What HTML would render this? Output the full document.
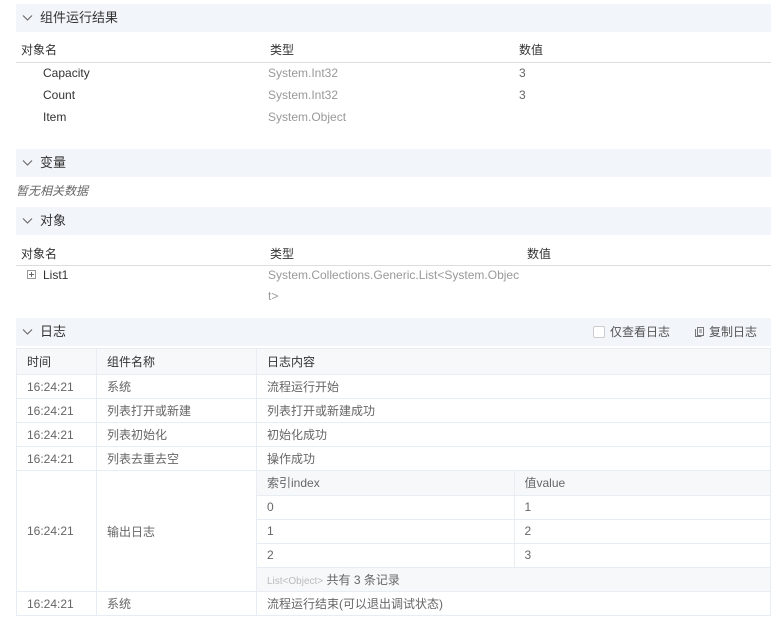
<!DOCTYPE html>
<html><head><meta charset="utf-8"><style>
*{margin:0;padding:0;box-sizing:border-box}
body{width:781px;height:622px;background:#fff;font-family:"Liberation Sans","Noto Sans CJK SC",sans-serif;font-size:12px;color:#333;position:relative;overflow:hidden}
.a{position:absolute;white-space:nowrap}
.hd{position:absolute;left:16px;width:755px;height:28px;background:#f2f5fa;font-size:13px;line-height:28px;padding-left:24px;color:#333}
.hd svg.ch{position:absolute;left:6px;top:10px}
.gray{color:#999}
table{position:absolute;border-collapse:collapse;font-size:12px;color:#666}
td{border:1px solid #e8ecf3;padding:0 0 0 10px;height:24px}
</style></head><body>
<div class="hd" style="top:4px"><svg class="ch" width="11" height="8"><path d="M1 1.5l4.5 4.5 4.5-4.5" fill="none" stroke="#666" stroke-width="1.1"/></svg>组件运行结果</div>
<div class="a" style="top:36px;left:16px;width:755px;height:27px;border-bottom:1px solid #ddd"></div>
<div class="a" style="top:41px;left:21px">对象名</div><div class="a" style="top:41px;left:270px">类型</div><div class="a" style="top:41px;left:519px">数值</div>
<div class="a" style="top:66px;left:43px">Capacity</div><div class="a gray" style="top:66px;left:268px">System.Int32</div><div class="a" style="top:66px;left:519px;color:#666">3</div>
<div class="a" style="top:88px;left:43px">Count</div><div class="a gray" style="top:88px;left:268px">System.Int32</div><div class="a" style="top:88px;left:519px;color:#666">3</div>
<div class="a" style="top:110px;left:43px">Item</div><div class="a gray" style="top:110px;left:268px">System.Object</div>
<div class="hd" style="top:149px"><svg class="ch" width="11" height="8"><path d="M1 1.5l4.5 4.5 4.5-4.5" fill="none" stroke="#666" stroke-width="1.1"/></svg>变量</div>
<div class="a" style="top:182px;left:16px;font-style:italic;color:#666">暂无相关数据</div>
<div class="hd" style="top:207px"><svg class="ch" width="11" height="8"><path d="M1 1.5l4.5 4.5 4.5-4.5" fill="none" stroke="#666" stroke-width="1.1"/></svg>对象</div>
<div class="a" style="top:240px;left:16px;width:755px;height:26px;border-bottom:1px solid #ddd"></div>
<div class="a" style="top:245px;left:21px">对象名</div><div class="a" style="top:245px;left:270px">类型</div><div class="a" style="top:245px;left:527px">数值</div>
<svg class="a" style="top:270px;left:27px" width="9" height="9"><rect x=".5" y=".5" width="8" height="8" fill="none" stroke="#999"/><path d="M2 4.5h5M4.5 2v5" stroke="#666"/></svg>
<div class="a" style="top:268px;left:43px">List1</div>
<div class="a gray" style="top:268px;left:268px">System.Collections.Generic.List&lt;System.Objec</div>
<div class="a gray" style="top:289px;left:268px">t&gt;</div>
<div class="hd" style="top:318px"><svg class="ch" width="11" height="8"><path d="M1 1.5l4.5 4.5 4.5-4.5" fill="none" stroke="#666" stroke-width="1.1"/></svg>日志
<span class="a" style="left:577px;top:0;font-size:12px;color:#555"><span style="display:inline-block;width:12px;height:12px;border:1px solid #ccc;background:#fff;vertical-align:-2px;margin-right:5px;border-radius:2px"></span>仅查看日志</span>
<span class="a" style="left:678px;top:0;font-size:12px;color:#555"><svg width="11" height="11" style="vertical-align:-1px;margin-right:4px"><rect x="3.5" y="1.5" width="6" height="8" fill="none" stroke="#777"/><path d="M1.5 3v7.5h6" fill="none" stroke="#777"/><path d="M5 4h3M5 6h3" stroke="#777"/></svg>复制日志</span></div>
<table style="top:348px;left:16px;width:755px">
<colgroup><col style="width:80px"><col style="width:160px"><col></colgroup>
<tr style="background:#f7f8fa;color:#333"><td style="height:26px">时间</td><td>组件名称</td><td>日志内容</td></tr>
<tr><td>16:24:21</td><td>系统</td><td>流程运行开始</td></tr>
<tr><td>16:24:21</td><td>列表打开或新建</td><td>列表打开或新建成功</td></tr>
<tr><td>16:24:21</td><td>列表初始化</td><td>初始化成功</td></tr>
<tr><td>16:24:21</td><td>列表去重去空</td><td>操作成功</td></tr>
<tr><td style="height:121px">16:24:21</td><td>输出日志</td><td style="padding:0;vertical-align:top">
<table style="position:static;width:100%;border-collapse:collapse">
<tr style="background:#f7f8fa"><td style="border-top:0;border-left:0;width:257px">索引index</td><td style="border-top:0;border-right:0">值value</td></tr>
<tr><td style="border-left:0">0</td><td style="border-right:0">1</td></tr>
<tr><td style="border-left:0">1</td><td style="border-right:0">2</td></tr>
<tr><td style="border-left:0">2</td><td style="border-right:0">3</td></tr>
<tr style="background:#f7f8fa"><td colspan="2" style="border:0;height:24px"><span style="font-size:10px;color:#bbb">List&lt;Object&gt;</span> 共有 3 条记录</td></tr>
</table></td></tr>
<tr><td>16:24:21</td><td>系统</td><td>流程运行结束(可以退出调试状态)</td></tr>
</table>
</body></html>
